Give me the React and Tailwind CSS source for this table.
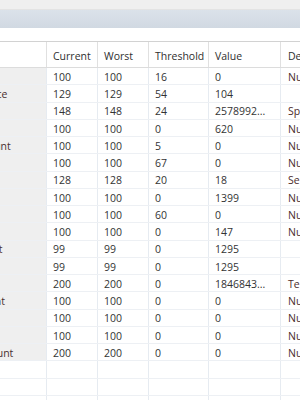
import React from 'react';

const rows = [
  ['Raw Read Error Rate', '100', '100', '16', '0', 'Nu'],
  ['Throughput Performance', '129', '129', '54', '104', ''],
  ['Spin-Up Time', '148', '148', '24', '2578992...', 'Sp'],
  ['Start/Stop Count', '100', '100', '0', '620', 'Nu'],
  ['Reallocated Sectors Count', '100', '100', '5', '0', 'Nu'],
  ['Seek Error Rate', '100', '100', '67', '0', 'Nu'],
  ['Seek Time Performance', '128', '128', '20', '18', 'Se'],
  ['Power-On Hours', '100', '100', '0', '1399', 'Nu'],
  ['Spin Retry Count', '100', '100', '60', '0', 'Nu'],
  ['Power Cycle Count', '100', '100', '0', '147', 'Nu'],
  ['Power-Off Retract Count', '99', '99', '0', '1295', ''],
  ['Load Cycle Count', '99', '99', '0', '1295', ''],
  ['Temperature', '200', '200', '0', '1846843...', 'Te'],
  ['Reallocation Event Count', '100', '100', '0', '0', 'Nu'],
  ['Pending Sector Count', '100', '100', '0', '0', 'Nu'],
  ['Offline Uncorrectable', '100', '100', '0', '0', 'Nu'],
  ['UltraDMA CRC Error Count', '200', '200', '0', '0', 'Nu'],
];

// the first column is mostly scrolled off to the left
const cell = 'shrink-0 pl-[6px] pt-[3px] border-r border-[#e6ebf1] flex items-center whitespace-nowrap overflow-hidden';

const Row = ({ r, empty }) => (
  <div className="flex h-[17.25px] border-b border-[#edf0f4]">
    <div className={`${cell} w-[167px] !pl-[3px] ${empty ? 'bg-white' : 'bg-[#efefef]'} text-[#4a2f2f]`}>{r[0]}</div>
    <div className={`${cell} w-[51px]`}>{r[1]}</div>
    <div className={`${cell} w-[51px]`}>{r[2]}</div>
    <div className={`${cell} w-[60px]`}>{r[3]}</div>
    <div className={`${cell} w-[72px]`}>{r[4]}</div>
    <div className={`${cell} w-[80px] !pl-[7px] text-[#4a2b2b]`}>{r[5]}</div>
  </div>
);

export default function App() {
  const head = 'shrink-0 pl-[6px] pt-[4px] border-r border-[#e0e0e0] flex items-center whitespace-nowrap';
  return (
    <div className="w-[300px] h-[400px] overflow-hidden bg-white text-[#333] text-[10.5px] font-['Open_Sans',sans-serif]">
      <div className="h-[10px] bg-[#efefef] border-b border-[#e3e3e3]" />
      <div className="h-[18px] bg-gradient-to-b from-[#dbe2ea] to-[#d1d9e2]" />
      <div className="h-[13px] bg-white" />
      <div className="-ml-[120px] border-t border-[#d2d2d2]">
        <div className="flex h-[26px] border-b border-[#dcdcdc] bg-white text-[#2f2f2f]">
          <div className={`${head} w-[167px]`} />
          <div className={`${head} w-[51px]`}>Current</div>
          <div className={`${head} w-[51px]`}>Worst</div>
          <div className={`${head} w-[60px]`}>Threshold</div>
          <div className={`${head} w-[72px]`}>Value</div>
          <div className={`${head} w-[80px] !pl-[7px]`}>Description</div>
        </div>
        {rows.map((r, i) => (
          <Row key={i} r={r} />
        ))}
        {[0, 1, 2].map((i) => (
          <Row key={'e' + i} r={['', '', '', '', '', '']} empty />
        ))}
      </div>
    </div>
  );
}
